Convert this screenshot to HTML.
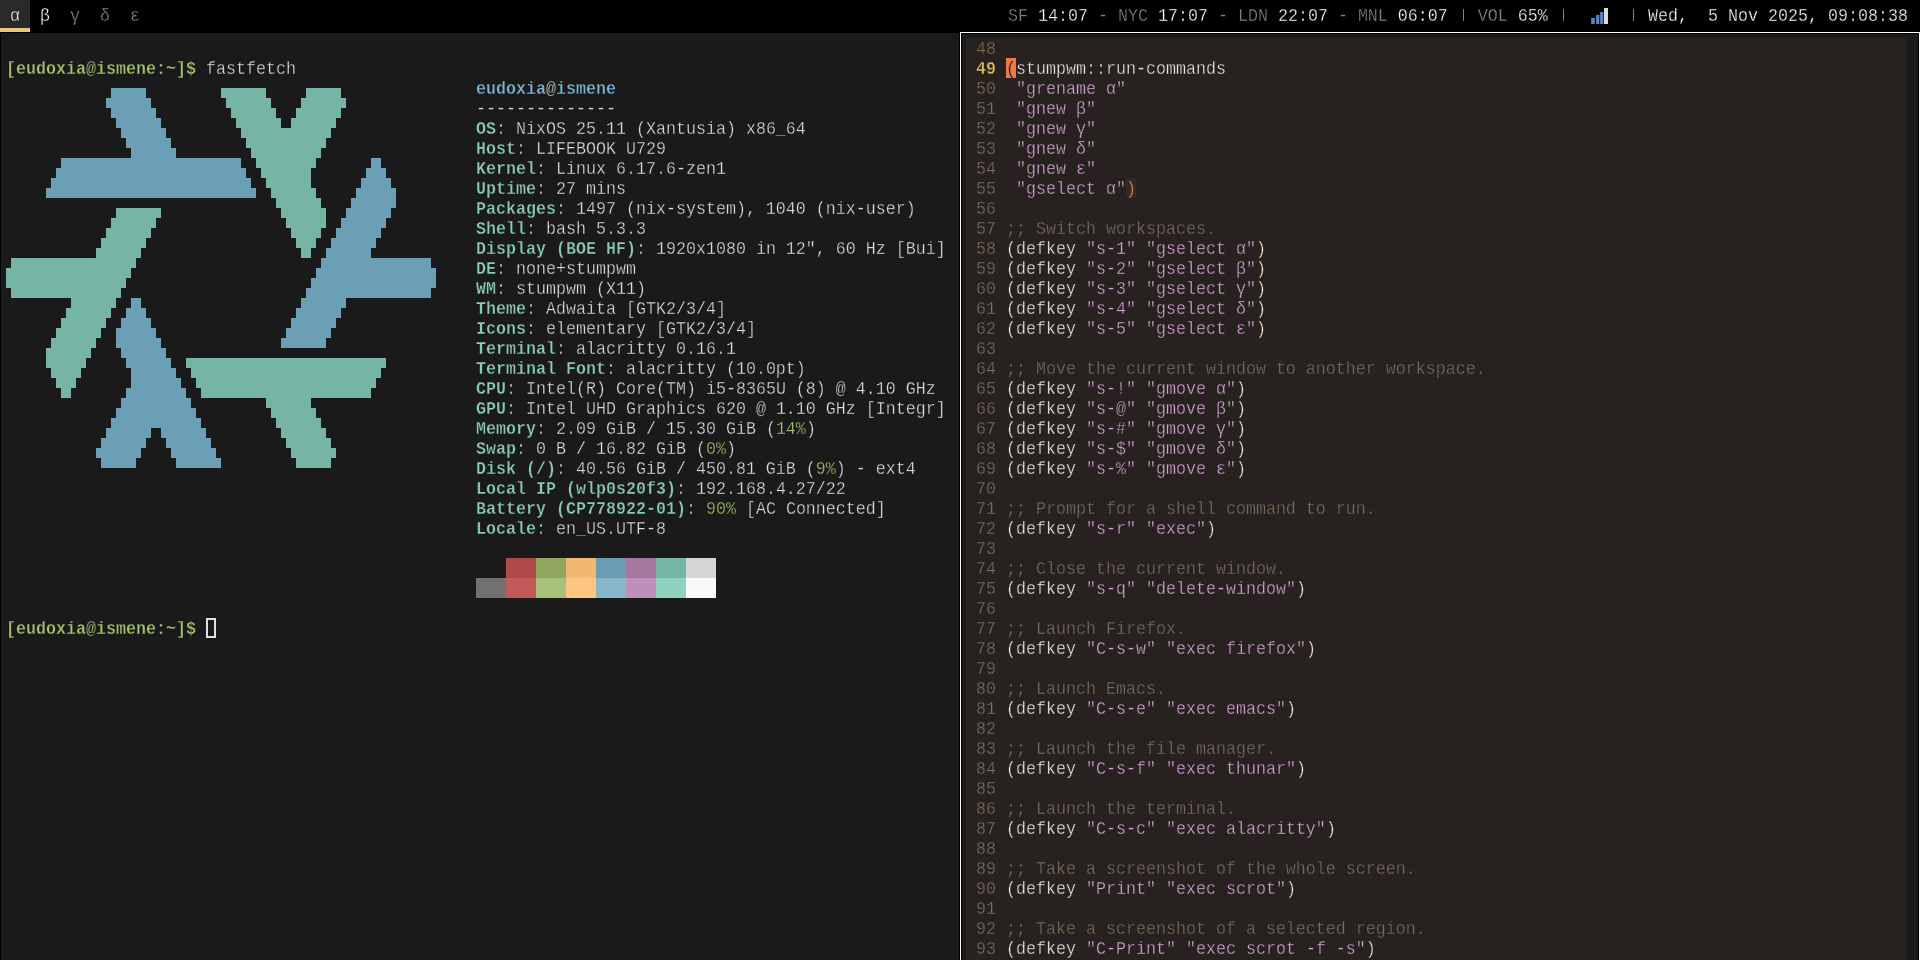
<!DOCTYPE html><html><head><meta charset="utf-8"><style>
html,body{margin:0;padding:0;}
body{width:1920px;height:960px;overflow:hidden;background:#000;position:relative;font-family:"Liberation Mono", monospace;}
.abs{position:absolute;}
.ln{position:absolute;white-space:pre;font-size:16.667px;line-height:20px;height:20px;transform-origin:0 14.4px;transform:translateY(1.6px) scaleY(1.13);}
#wrap{position:absolute;left:0;top:0;width:1920px;height:960px;will-change:transform;}
#bar{left:0;top:0;width:1920px;height:32px;background:#000;}
#tab{left:0;top:0;width:30px;height:28px;background:#2a2a2a;}
#tabu{left:0;top:28px;width:30px;height:4px;background:#f0c674;}
#term{left:1px;top:33px;width:958px;height:927px;background:#1a1a1a;}
#ewhite{left:960px;top:32px;width:960px;height:928px;background:#fff;}
#eblack{left:961px;top:33px;width:958px;height:927px;background:#000;}
#epad{left:962px;top:34px;width:956px;height:926px;background:#1a1a1a;}
#ebg{left:966px;top:38px;width:940px;height:922px;background:#272120;}
.g{color:#7d8793;} .w{color:#ffffff;}
.t1 .ln{-webkit-text-stroke:0.3px #1a1a1a;} .t1 .key{-webkit-text-stroke:0.3px #1a1a1a;} .t2 .ln{-webkit-text-stroke:0.3px #272120;} .t0 .ln{-webkit-text-stroke:0.3px #000;}
.pr{color:#a6c46a;font-weight:bold;} .tx{color:#dcdcdc;} .key{color:#88cbbb;font-weight:bold;} .hd{color:#7ab6d4;font-weight:bold;}
.t1 .pr,.t1 .hd{-webkit-text-stroke:0.3px #1a1a1a;}
.grn{color:#a6c46a;}
.lnum{color:#7b705d;} .cur{color:#e2c062;font-weight:bold;} .df{color:#efe7d6;} .st{color:#d4a4d4;} .cm{color:#786d5a;}
.cursor{color:#1e1a1a;-webkit-text-stroke:0.2px #f07846 !important;} .mp{color:#f07846;-webkit-text-stroke:0.2px #302b28 !important;}
</style></head><body>
<div id="wrap">
<div id="bar" class="abs"></div><div id="tab" class="abs"></div><div id="tabu" class="abs"></div><div class="t0">
<div class="ln w" style="left:10px;top:5px">α</div>
<div class="ln w" style="left:40px;top:5px">β</div>
<div class="ln g" style="left:70px;top:5px">γ</div>
<div class="ln g" style="left:100px;top:5px">δ</div>
<div class="ln g" style="left:130px;top:5px">ε</div>
<div class="ln" style="left:1008px;top:5px"><span class="g">SF </span><span class="w">14:07</span><span class="g"> - NYC </span><span class="w">17:07</span><span class="g"> - LDN </span><span class="w">22:07</span><span class="g"> - MNL </span><span class="w">06:07</span><span class="g">   VOL </span><span class="w">65%</span></div>
<div class="abs" style="left:1463px;top:9px;width:1px;height:12px;background:#7d8793"></div>
<div class="abs" style="left:1563px;top:9px;width:1px;height:12px;background:#7d8793"></div>
<div class="abs" style="left:1633px;top:9px;width:1px;height:12px;background:#7d8793"></div>
<div class="ln w" style="left:1648px;top:5px">Wed,  5 Nov 2025, 09:08:38</div>
<svg class="abs" style="left:1590px;top:6px" width="20" height="20" viewBox="0 0 20 20"><defs><linearGradient id="bl" x1="0" x2="1"><stop offset="0" stop-color="#3f63a8"/><stop offset="0.5" stop-color="#6a8fd0"/><stop offset="1" stop-color="#3f63a8"/></linearGradient></defs><rect x="1" y="12" width="4" height="6" fill="url(#bl)"/><rect x="6" y="9" width="3.5" height="9" fill="url(#bl)"/><rect x="10" y="6" width="3.5" height="12" fill="url(#bl)"/><rect x="14" y="2" width="4" height="16" fill="#dcdcdc"/></svg>
</div><div id="term" class="abs"></div><div class="t1">
<div class="ln" style="left:6px;top:58px"><span class="pr">[eudoxia@ismene:~]$ </span><span class="tx">fastfetch</span></div>
<svg class="abs" style="left:0;top:0" width="960" height="960"><path fill="#6a9fb5" d="M111 88h35v10h-35zM106 98h45v10h-45zM111 108h45v10h-45zM116 118h45v10h-45zM121 128h45v10h-45zM126 138h45v10h-45zM131 148h45v10h-45zM61 158h180v10h-180zM371 158h10v10h-10zM56 168h190v10h-190zM366 168h20v10h-20zM51 178h200v10h-200zM361 178h30v10h-30zM46 188h210v10h-210zM356 188h40v10h-40zM351 198h45v10h-45zM346 208h45v10h-45zM341 218h45v10h-45zM336 228h45v10h-45zM331 238h45v10h-45zM326 248h45v10h-45zM321 258h110v10h-110zM316 268h120v10h-120zM311 278h125v10h-125zM306 288h125v10h-125zM131 298h10v10h-10zM301 298h45v10h-45zM126 308h20v10h-20zM296 308h45v10h-45zM121 318h30v10h-30zM291 318h45v10h-45zM116 328h40v10h-40zM286 328h45v10h-45zM116 338h45v10h-45zM281 338h45v10h-45zM121 348h45v10h-45zM126 358h45v10h-45zM131 368h45v10h-45zM131 378h50v10h-50zM126 388h60v10h-60zM121 398h70v10h-70zM116 408h80v10h-80zM111 418h90v10h-90zM106 428h45v10h-45zM161 428h45v10h-45zM101 438h45v10h-45zM166 438h45v10h-45zM96 448h45v10h-45zM171 448h45v10h-45zM101 458h35v10h-35zM176 458h45v10h-45z"/><path fill="#76b5a6" d="M221 88h45v10h-45zM306 88h35v10h-35zM226 98h45v10h-45zM301 98h45v10h-45zM231 108h45v10h-45zM296 108h45v10h-45zM236 118h45v10h-45zM291 118h45v10h-45zM241 128h90v10h-90zM246 138h80v10h-80zM251 148h70v10h-70zM256 158h60v10h-60zM261 168h50v10h-50zM266 178h45v10h-45zM271 188h45v10h-45zM276 198h45v10h-45zM116 208h45v10h-45zM281 208h45v10h-45zM111 218h45v10h-45zM286 218h40v10h-40zM106 228h45v10h-45zM291 228h30v10h-30zM101 238h45v10h-45zM296 238h20v10h-20zM96 248h45v10h-45zM301 248h10v10h-10zM11 258h125v10h-125zM6 268h125v10h-125zM6 278h120v10h-120zM11 288h110v10h-110zM71 298h45v10h-45zM66 308h45v10h-45zM61 318h45v10h-45zM56 328h45v10h-45zM51 338h45v10h-45zM46 348h45v10h-45zM46 358h40v10h-40zM186 358h200v10h-200zM51 368h30v10h-30zM191 368h190v10h-190zM56 378h20v10h-20zM196 378h180v10h-180zM61 388h10v10h-10zM201 388h170v10h-170zM266 398h45v10h-45zM271 408h45v10h-45zM276 418h45v10h-45zM281 428h45v10h-45zM286 438h45v10h-45zM291 448h45v10h-45zM296 458h35v10h-35z"/></svg>
<div class="ln" style="left:476px;top:78px"><span class="hd">eudoxia</span><span class="tx">@</span><span class="hd">ismene</span></div>
<div class="ln" style="left:476px;top:98px"><span class="tx">--------------</span></div>
<div class="ln" style="left:476px;top:118px"><span class="key">OS</span><span class="tx">: NixOS 25.11 (Xantusia) x86_64</span></div>
<div class="ln" style="left:476px;top:138px"><span class="key">Host</span><span class="tx">: LIFEBOOK U729</span></div>
<div class="ln" style="left:476px;top:158px"><span class="key">Kernel</span><span class="tx">: Linux 6.17.6-zen1</span></div>
<div class="ln" style="left:476px;top:178px"><span class="key">Uptime</span><span class="tx">: 27 mins</span></div>
<div class="ln" style="left:476px;top:198px"><span class="key">Packages</span><span class="tx">: 1497 (nix-system), 1040 (nix-user)</span></div>
<div class="ln" style="left:476px;top:218px"><span class="key">Shell</span><span class="tx">: bash 5.3.3</span></div>
<div class="ln" style="left:476px;top:238px"><span class="key">Display (BOE HF)</span><span class="tx">: 1920x1080 in 12", 60 Hz [Bui]</span></div>
<div class="ln" style="left:476px;top:258px"><span class="key">DE</span><span class="tx">: none+stumpwm</span></div>
<div class="ln" style="left:476px;top:278px"><span class="key">WM</span><span class="tx">: stumpwm (X11)</span></div>
<div class="ln" style="left:476px;top:298px"><span class="key">Theme</span><span class="tx">: Adwaita [GTK2/3/4]</span></div>
<div class="ln" style="left:476px;top:318px"><span class="key">Icons</span><span class="tx">: elementary [GTK2/3/4]</span></div>
<div class="ln" style="left:476px;top:338px"><span class="key">Terminal</span><span class="tx">: alacritty 0.16.1</span></div>
<div class="ln" style="left:476px;top:358px"><span class="key">Terminal Font</span><span class="tx">: alacritty (10.0pt)</span></div>
<div class="ln" style="left:476px;top:378px"><span class="key">CPU</span><span class="tx">: Intel(R) Core(TM) i5-8365U (8) @ 4.10 GHz</span></div>
<div class="ln" style="left:476px;top:398px"><span class="key">GPU</span><span class="tx">: Intel UHD Graphics 620 @ 1.10 GHz [Integr]</span></div>
<div class="ln" style="left:476px;top:418px"><span class="key">Memory</span><span class="tx">: 2.09 GiB / 15.30 GiB (</span><span class="grn">14%</span><span class="tx">)</span></div>
<div class="ln" style="left:476px;top:438px"><span class="key">Swap</span><span class="tx">: 0 B / 16.82 GiB (</span><span class="grn">0%</span><span class="tx">)</span></div>
<div class="ln" style="left:476px;top:458px"><span class="key">Disk (/)</span><span class="tx">: 40.56 GiB / 450.81 GiB (</span><span class="grn">9%</span><span class="tx">) - ext4</span></div>
<div class="ln" style="left:476px;top:478px"><span class="key">Local IP (wlp0s20f3)</span><span class="tx">: 192.168.4.27/22</span></div>
<div class="ln" style="left:476px;top:498px"><span class="key">Battery (CP778922-01)</span><span class="tx">: </span><span class="grn">90%</span><span class="tx"> [AC Connected]</span></div>
<div class="ln" style="left:476px;top:518px"><span class="key">Locale</span><span class="tx">: en_US.UTF-8</span></div>
<div class="abs" style="left:476px;top:558px;width:30px;height:20px;background:#1a1a1a"></div><div class="abs" style="left:506px;top:558px;width:30px;height:20px;background:#b04a4a"></div><div class="abs" style="left:536px;top:558px;width:30px;height:20px;background:#8fa65c"></div><div class="abs" style="left:566px;top:558px;width:30px;height:20px;background:#f0b872"></div><div class="abs" style="left:596px;top:558px;width:30px;height:20px;background:#6a9cb4"></div><div class="abs" style="left:626px;top:558px;width:30px;height:20px;background:#a6779e"></div><div class="abs" style="left:656px;top:558px;width:30px;height:20px;background:#76b5a6"></div><div class="abs" style="left:686px;top:558px;width:30px;height:20px;background:#d6d6d6"></div><div class="abs" style="left:476px;top:578px;width:30px;height:20px;background:#717171"></div><div class="abs" style="left:506px;top:578px;width:30px;height:20px;background:#c25a5a"></div><div class="abs" style="left:536px;top:578px;width:30px;height:20px;background:#a8c178"></div><div class="abs" style="left:566px;top:578px;width:30px;height:20px;background:#fbc684"></div><div class="abs" style="left:596px;top:578px;width:30px;height:20px;background:#88b6c8"></div><div class="abs" style="left:626px;top:578px;width:30px;height:20px;background:#c08fb8"></div><div class="abs" style="left:656px;top:578px;width:30px;height:20px;background:#90d2c0"></div><div class="abs" style="left:686px;top:578px;width:30px;height:20px;background:#f8f8f8"></div>
<div class="ln" style="left:6px;top:618px"><span class="pr">[eudoxia@ismene:~]$ </span></div>
<div class="abs" style="left:206px;top:618px;width:10px;height:20px;box-sizing:border-box;border:2px solid #e0e0e0"></div>
</div><div id="ewhite" class="abs"></div><div id="eblack" class="abs"></div><div id="epad" class="abs"></div><div id="ebg" class="abs"></div><div class="t2">
<div class="abs" style="left:1006px;top:58px;width:10px;height:20px;background:#f07846"></div>
<div class="abs" style="left:1126px;top:178px;width:10px;height:20px;background:#302b28"></div>
<div class="ln lnum" style="left:976px;top:38px">48</div>
<div class="ln cur" style="left:976px;top:58px">49</div>
<div class="ln" style="left:1006px;top:58px"><span class="cursor">(</span><span class="df">stumpwm::run-commands</span></div>
<div class="ln lnum" style="left:976px;top:78px">50</div>
<div class="ln" style="left:1006px;top:78px"><span class="df"> </span><span class="st">"grename α"</span></div>
<div class="ln lnum" style="left:976px;top:98px">51</div>
<div class="ln" style="left:1006px;top:98px"><span class="df"> </span><span class="st">"gnew β"</span></div>
<div class="ln lnum" style="left:976px;top:118px">52</div>
<div class="ln" style="left:1006px;top:118px"><span class="df"> </span><span class="st">"gnew γ"</span></div>
<div class="ln lnum" style="left:976px;top:138px">53</div>
<div class="ln" style="left:1006px;top:138px"><span class="df"> </span><span class="st">"gnew δ"</span></div>
<div class="ln lnum" style="left:976px;top:158px">54</div>
<div class="ln" style="left:1006px;top:158px"><span class="df"> </span><span class="st">"gnew ε"</span></div>
<div class="ln lnum" style="left:976px;top:178px">55</div>
<div class="ln" style="left:1006px;top:178px"><span class="df"> </span><span class="st">"gselect α"</span><span class="mp">)</span></div>
<div class="ln lnum" style="left:976px;top:198px">56</div>
<div class="ln lnum" style="left:976px;top:218px">57</div>
<div class="ln" style="left:1006px;top:218px"><span class="cm">;; Switch workspaces.</span></div>
<div class="ln lnum" style="left:976px;top:238px">58</div>
<div class="ln" style="left:1006px;top:238px"><span class="df">(defkey </span><span class="st">"s-1"</span><span class="df"> </span><span class="st">"gselect α"</span><span class="df">)</span></div>
<div class="ln lnum" style="left:976px;top:258px">59</div>
<div class="ln" style="left:1006px;top:258px"><span class="df">(defkey </span><span class="st">"s-2"</span><span class="df"> </span><span class="st">"gselect β"</span><span class="df">)</span></div>
<div class="ln lnum" style="left:976px;top:278px">60</div>
<div class="ln" style="left:1006px;top:278px"><span class="df">(defkey </span><span class="st">"s-3"</span><span class="df"> </span><span class="st">"gselect γ"</span><span class="df">)</span></div>
<div class="ln lnum" style="left:976px;top:298px">61</div>
<div class="ln" style="left:1006px;top:298px"><span class="df">(defkey </span><span class="st">"s-4"</span><span class="df"> </span><span class="st">"gselect δ"</span><span class="df">)</span></div>
<div class="ln lnum" style="left:976px;top:318px">62</div>
<div class="ln" style="left:1006px;top:318px"><span class="df">(defkey </span><span class="st">"s-5"</span><span class="df"> </span><span class="st">"gselect ε"</span><span class="df">)</span></div>
<div class="ln lnum" style="left:976px;top:338px">63</div>
<div class="ln lnum" style="left:976px;top:358px">64</div>
<div class="ln" style="left:1006px;top:358px"><span class="cm">;; Move the current window to another workspace.</span></div>
<div class="ln lnum" style="left:976px;top:378px">65</div>
<div class="ln" style="left:1006px;top:378px"><span class="df">(defkey </span><span class="st">"s-!"</span><span class="df"> </span><span class="st">"gmove α"</span><span class="df">)</span></div>
<div class="ln lnum" style="left:976px;top:398px">66</div>
<div class="ln" style="left:1006px;top:398px"><span class="df">(defkey </span><span class="st">"s-@"</span><span class="df"> </span><span class="st">"gmove β"</span><span class="df">)</span></div>
<div class="ln lnum" style="left:976px;top:418px">67</div>
<div class="ln" style="left:1006px;top:418px"><span class="df">(defkey </span><span class="st">"s-#"</span><span class="df"> </span><span class="st">"gmove γ"</span><span class="df">)</span></div>
<div class="ln lnum" style="left:976px;top:438px">68</div>
<div class="ln" style="left:1006px;top:438px"><span class="df">(defkey </span><span class="st">"s-$"</span><span class="df"> </span><span class="st">"gmove δ"</span><span class="df">)</span></div>
<div class="ln lnum" style="left:976px;top:458px">69</div>
<div class="ln" style="left:1006px;top:458px"><span class="df">(defkey </span><span class="st">"s-%"</span><span class="df"> </span><span class="st">"gmove ε"</span><span class="df">)</span></div>
<div class="ln lnum" style="left:976px;top:478px">70</div>
<div class="ln lnum" style="left:976px;top:498px">71</div>
<div class="ln" style="left:1006px;top:498px"><span class="cm">;; Prompt for a shell command to run.</span></div>
<div class="ln lnum" style="left:976px;top:518px">72</div>
<div class="ln" style="left:1006px;top:518px"><span class="df">(defkey </span><span class="st">"s-r"</span><span class="df"> </span><span class="st">"exec"</span><span class="df">)</span></div>
<div class="ln lnum" style="left:976px;top:538px">73</div>
<div class="ln lnum" style="left:976px;top:558px">74</div>
<div class="ln" style="left:1006px;top:558px"><span class="cm">;; Close the current window.</span></div>
<div class="ln lnum" style="left:976px;top:578px">75</div>
<div class="ln" style="left:1006px;top:578px"><span class="df">(defkey </span><span class="st">"s-q"</span><span class="df"> </span><span class="st">"delete-window"</span><span class="df">)</span></div>
<div class="ln lnum" style="left:976px;top:598px">76</div>
<div class="ln lnum" style="left:976px;top:618px">77</div>
<div class="ln" style="left:1006px;top:618px"><span class="cm">;; Launch Firefox.</span></div>
<div class="ln lnum" style="left:976px;top:638px">78</div>
<div class="ln" style="left:1006px;top:638px"><span class="df">(defkey </span><span class="st">"C-s-w"</span><span class="df"> </span><span class="st">"exec firefox"</span><span class="df">)</span></div>
<div class="ln lnum" style="left:976px;top:658px">79</div>
<div class="ln lnum" style="left:976px;top:678px">80</div>
<div class="ln" style="left:1006px;top:678px"><span class="cm">;; Launch Emacs.</span></div>
<div class="ln lnum" style="left:976px;top:698px">81</div>
<div class="ln" style="left:1006px;top:698px"><span class="df">(defkey </span><span class="st">"C-s-e"</span><span class="df"> </span><span class="st">"exec emacs"</span><span class="df">)</span></div>
<div class="ln lnum" style="left:976px;top:718px">82</div>
<div class="ln lnum" style="left:976px;top:738px">83</div>
<div class="ln" style="left:1006px;top:738px"><span class="cm">;; Launch the file manager.</span></div>
<div class="ln lnum" style="left:976px;top:758px">84</div>
<div class="ln" style="left:1006px;top:758px"><span class="df">(defkey </span><span class="st">"C-s-f"</span><span class="df"> </span><span class="st">"exec thunar"</span><span class="df">)</span></div>
<div class="ln lnum" style="left:976px;top:778px">85</div>
<div class="ln lnum" style="left:976px;top:798px">86</div>
<div class="ln" style="left:1006px;top:798px"><span class="cm">;; Launch the terminal.</span></div>
<div class="ln lnum" style="left:976px;top:818px">87</div>
<div class="ln" style="left:1006px;top:818px"><span class="df">(defkey </span><span class="st">"C-s-c"</span><span class="df"> </span><span class="st">"exec alacritty"</span><span class="df">)</span></div>
<div class="ln lnum" style="left:976px;top:838px">88</div>
<div class="ln lnum" style="left:976px;top:858px">89</div>
<div class="ln" style="left:1006px;top:858px"><span class="cm">;; Take a screenshot of the whole screen.</span></div>
<div class="ln lnum" style="left:976px;top:878px">90</div>
<div class="ln" style="left:1006px;top:878px"><span class="df">(defkey </span><span class="st">"Print"</span><span class="df"> </span><span class="st">"exec scrot"</span><span class="df">)</span></div>
<div class="ln lnum" style="left:976px;top:898px">91</div>
<div class="ln lnum" style="left:976px;top:918px">92</div>
<div class="ln" style="left:1006px;top:918px"><span class="cm">;; Take a screenshot of a selected region.</span></div>
<div class="ln lnum" style="left:976px;top:938px">93</div>
<div class="ln" style="left:1006px;top:938px"><span class="df">(defkey </span><span class="st">"C-Print"</span><span class="df"> </span><span class="st">"exec scrot -f -s"</span><span class="df">)</span></div>
</div></div></body></html>
